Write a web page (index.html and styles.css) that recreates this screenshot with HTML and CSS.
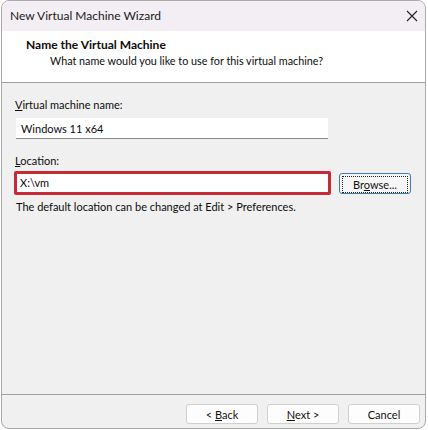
FILE: index.html
```html
<!DOCTYPE html>
<html lang="en">
  <head>
    <meta charset="UTF-8" />
    <meta name="viewport" content="width=device-width, initial-scale=1.0" />
    <title>New Virtual Machine Wizard</title>
    <link rel="stylesheet" href="styles.css">
  </head>
  <body>
    <div class="window">
      <!-- Title bar -->
      <div class="titlebar">
        <span class="title">New Virtual Machine Wizard</span>
        <button class="close-btn" aria-label="Close">
          <svg width="12" height="12" viewBox="0 0 12 12">
            <path d="M1 1 L11 11 M11 1 L1 11" stroke="#222" stroke-width="1.1" fill="none" />
          </svg>
        </button>
      </div>

      <!-- Page header -->
      <div class="page-header">
        <h1>Name the Virtual Machine</h1>
        <p>What name would you like to use for this virtual machine?</p>
      </div>

      <!-- Form -->
      <div class="page-body">
        <label class="field-label"><u>V</u>irtual machine name:</label>
        <div class="text-box name-box">Windows 11 x64</div>

        <label class="field-label location-label"><u>L</u>ocation:</label>
        <div class="location-row">
          <div class="text-box location-box">X:\vm</div>
          <button class="btn browse-btn"><span class="focus-ring">Br<u>o</u>wse...</span></button>
        </div>
        <p class="hint">The default location can be changed at Edit &gt; Preferences.</p>
      </div>

      <!-- Wizard buttons -->
      <div class="page-footer">
        <button class="btn">&lt; <u>B</u>ack</button>
        <button class="btn"><u>N</u>ext &gt;</button>
        <button class="btn">Cancel</button>
      </div>
    </div>
  </body>
</html>
```

FILE: styles.css
```css
/* General Styles */
body {
  margin: 0;
  padding: 0;
  background-color: #ffffff;
  font-family: Lato, "Noto Sans", sans-serif;
  font-size: 11px;
  color: #0c0c0c;
}

/* Dialog frame */
.window {
  width: 423px;
  height: 427px;
  margin-left: 1px;
  border: 1px solid #a9a9a9;
  border-radius: 8px;
  overflow: hidden;
  display: flex;
  flex-direction: column;
  background-color: #f0f0f0;
}

/* Title bar */
.titlebar {
  height: 29px;
  flex: none;
  display: flex;
  align-items: center;
  justify-content: space-between;
  padding: 0 6px 1px 8px;
  background-color: #f3eef3;
}

.titlebar .title {
  font-size: 12px;
  color: #1a1a1a;
}

.close-btn {
  border: none;
  background: none;
  padding: 0;
  width: 14px;
  height: 14px;
  display: flex;
  align-items: center;
  justify-content: center;
}

/* Header */
.page-header {
  height: 52px;
  flex: none;
  background-color: #ffffff;
  border-bottom: 1px solid #a0a0a0;
  padding: 6px 0 0 24px;
  box-sizing: border-box;
}

.page-header h1 {
  margin: 0;
  font-size: 12px;
  font-weight: bold;
  line-height: 16px;
}

.page-header p {
  margin: 0 0 0 24px;
  font-size: 10.8px;
  line-height: 15px;
}

/* Form area */
.page-body {
  flex: 1;
  padding: 14px 0 0 13px;
}

.field-label {
  display: block;
  line-height: 16px;
}

.text-box {
  background-color: #ffffff;
  line-height: 20px;
  padding: 0 5px;
  box-sizing: border-box;
}

.name-box {
  width: 312px;
  height: 21px;
  margin: 5px 0 0 1px;
  border-bottom: 1px solid #8a8a8a;
  line-height: 21px;
}

.location-label {
  margin-top: 14px;
}

.location-row {
  display: flex;
  align-items: center;
  margin-top: 2px;
  margin-left: -1px;
}

.location-box {
  width: 317px;
  height: 24px;
  border: 3px solid #c62a35;
  border-radius: 2px;
  line-height: 18px;
  padding: 0 3px;
}

/* Buttons */
.btn {
  width: 72px;
  height: 20px;
  font-family: inherit;
  font-size: 11px;
  color: #111;
  background-color: #fdfdfd;
  border: 1px solid #d0d0d0;
  border-radius: 3px;
  padding: 0;
}

.browse-btn {
  margin-left: 8px;
  height: 21px;
  border: 1px solid #3b7bbf;
  background-color: #f6f6f6;
  padding: 2px;
}

.browse-btn .focus-ring {
  display: block;
  height: 15px;
  line-height: 15px;
  border: 1px dotted #222;
}

.hint {
  margin: 4px 0 0 1px;
  line-height: 16px;
}

/* Footer */
.page-footer {
  height: 34px;
  flex: none;
  border-top: 1px solid #a0a0a0;
  display: flex;
  justify-content: flex-end;
  align-items: flex-start;
  gap: 9px;
  padding: 9px 5px 0 0;
  box-sizing: border-box;
}
```
